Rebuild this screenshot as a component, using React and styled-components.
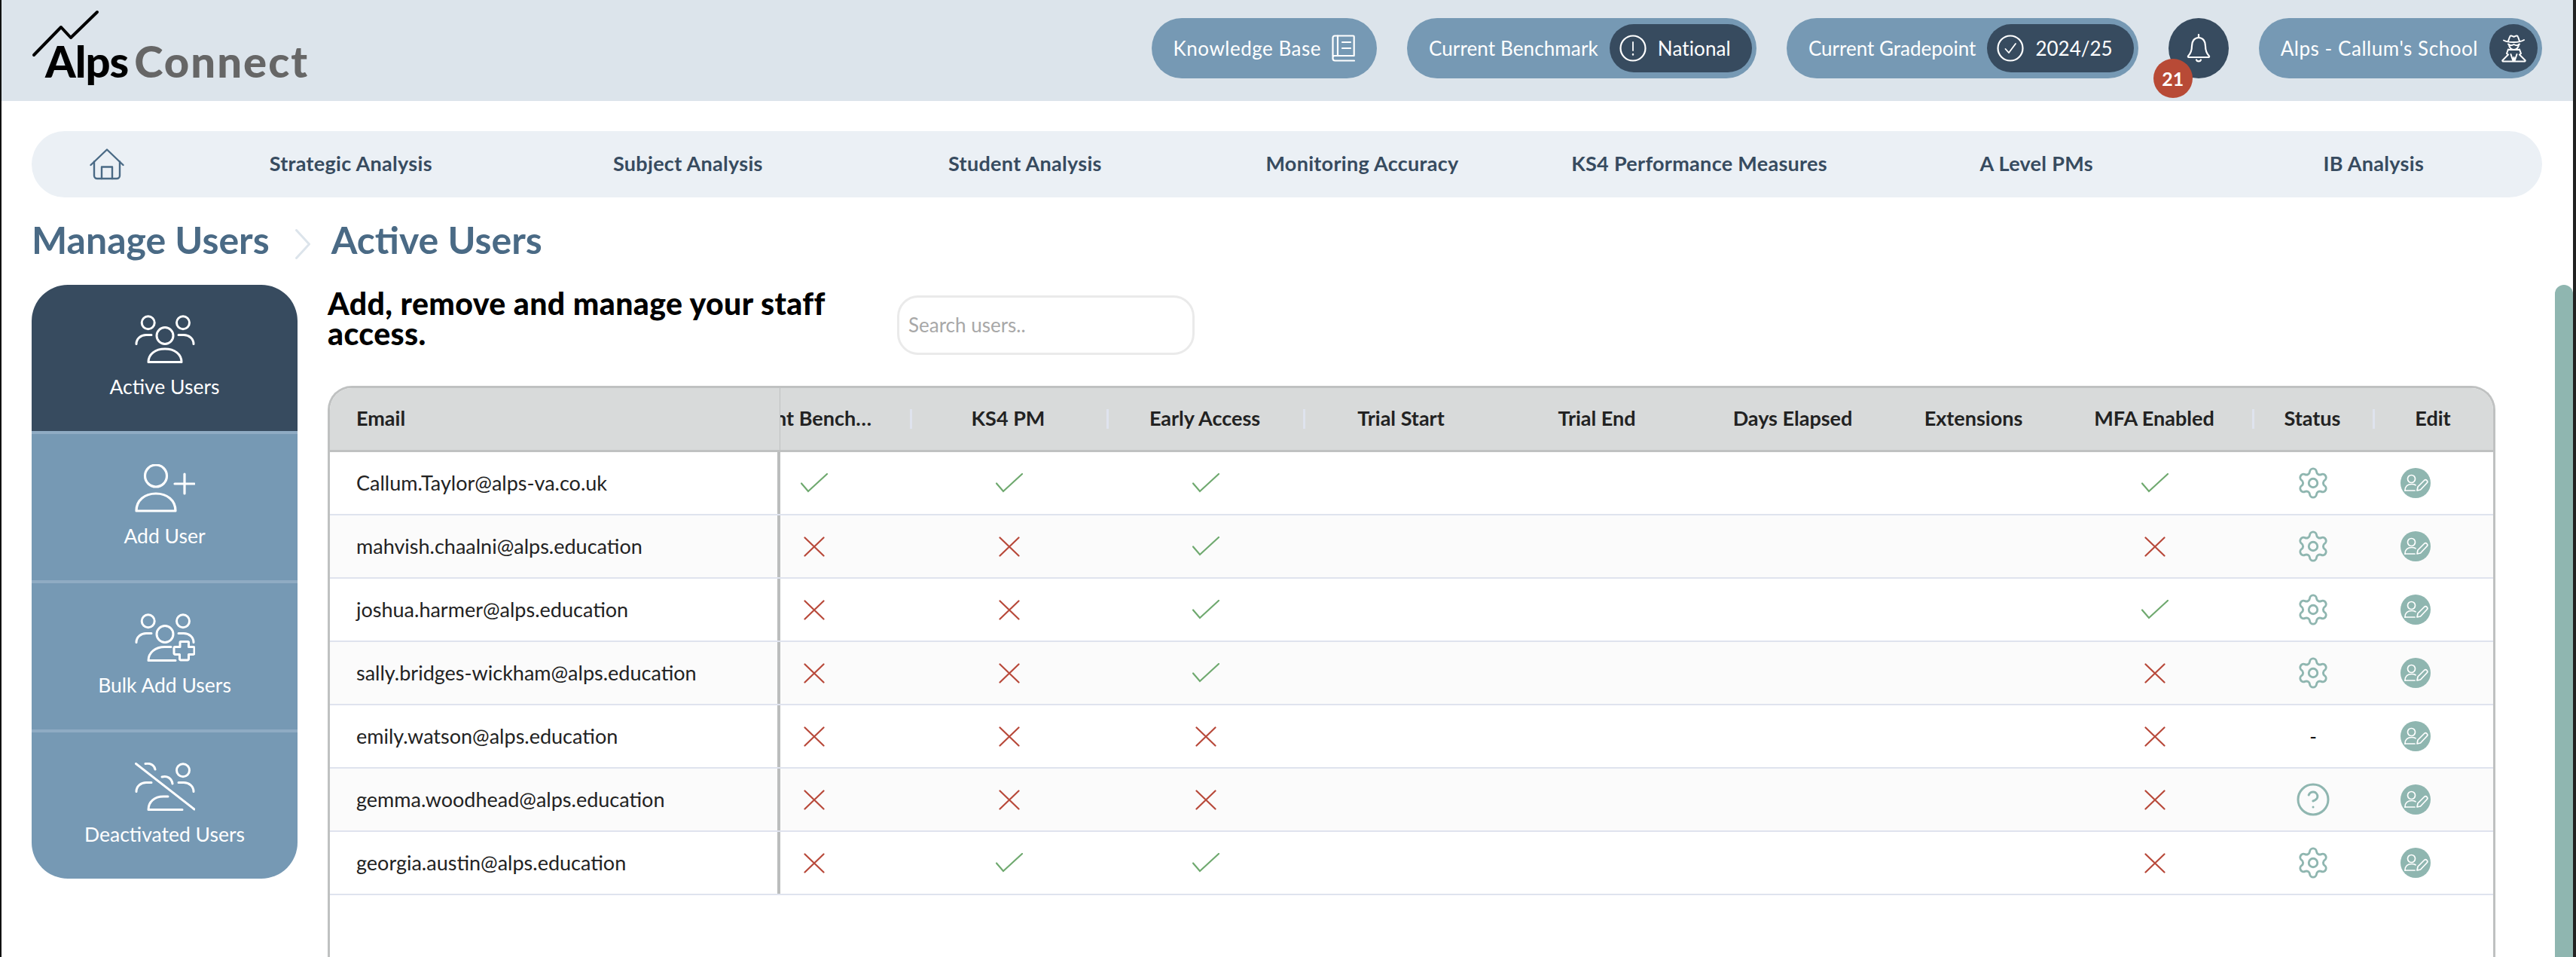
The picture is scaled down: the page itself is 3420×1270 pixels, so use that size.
import React from "react";
import styled, { createGlobalStyle } from "styled-components";
import { Settings, CircleHelp } from "lucide-react";

const FONT = `"Lato", "Noto Sans", sans-serif`;

const Global = createGlobalStyle`
  html, body { margin: 0; padding: 0; background: #fff; overflow: hidden; }
  * { box-sizing: border-box; }
  body { font-family: ${FONT}; }
`;

const Frame = styled.div`
  position: relative;
  width: 3420px;
  height: 1270px;
  overflow: hidden;
  background: #fff;
  border-left: 2px solid #111;
  border-right: 4px solid #222;
  font-size: 26px;
`;

const Header = styled.header`
  height: 134px;
  background: #dce4eb;
  display: flex;
  align-items: flex-start;
  justify-content: space-between;
  padding: 24px 41px 0 58px;
`;

const Logo = styled.div`
  position: relative;
  display: flex;
  align-items: baseline;
  gap: 8px;
  margin-top: 25px;
  font-family: "Lato", sans-serif;
  font-weight: 900;
  font-size: 58px;
  line-height: 64px;
`;
const LogoAlps = styled.span` color: #000; letter-spacing: -1px; `;
const LogoConnect = styled.span` color: #666; letter-spacing: 2px; `;
const LogoLine = styled.svg`
  position: absolute;
  left: -18px;
  top: -36px;
`;

const HeaderTools = styled.div`
  display: flex;
  align-items: center;
  gap: 40px;
`;

const Pill = styled.div`
  height: 80px;
  border-radius: 40px;
  background: #7699b4;
  color: #fff;
  display: flex;
  align-items: center;
  padding: ${(p) => p.$pad || "0 6px 0 29px"};
  gap: ${(p) => p.$gap || "15px"};
  font-size: 26px;
  letter-spacing: ${(p) => p.$track || "0"};
  white-space: nowrap;
`;

const PillValue = styled.div`
  height: 64px;
  border-radius: 32px;
  background: #374b5f;
  display: flex;
  align-items: center;
  justify-content: center;
  gap: 15px;
  min-width: ${(p) => p.$min || "64px"};
  padding: ${(p) => p.$pad || "0 28px 0 13px"};
`;

const BellButton = styled.div`
  position: relative;
  width: 80px;
  height: 80px;
  border-radius: 50%;
  background: #374b5f;
  display: flex;
  align-items: center;
  justify-content: center;
`;

const Badge = styled.span`
  position: absolute;
  left: -20px;
  top: 54px;
  width: 52px;
  height: 52px;
  border-radius: 50%;
  background: #b84a36;
  color: #fff;
  font-size: 25px;
  font-weight: 700;
  display: flex;
  align-items: center;
  justify-content: center;
`;

const Nav = styled.nav`
  height: 88px;
  margin: 40px 41px 0 40px;
  padding-bottom: 3px;
  border-radius: 44px;
  background: #ebf0f5;
  display: flex;
  align-items: center;
`;
const HomeLink = styled.div`
  width: 200px;
  display: flex;
  justify-content: center;
  margin-top: 3px;
`;
const NavLink = styled.div`
  flex: 1;
  text-align: center;
  color: #374b5f;
  font-weight: 700;
  font-size: 27px;
  letter-spacing: 0.3px;
  white-space: nowrap;
`;

const Crumbs = styled.div`
  height: 116px;
  margin-left: 40px;
  padding-bottom: 4px;
  display: flex;
  align-items: center;
  font-size: 50px;
  font-weight: 700;
  color: #4a6a85;
`;
const CrumbText = styled.span`
  white-space: nowrap;
`;
const CrumbChevron = styled.svg`
  margin: 12px 28px 0 34px;
`;

const Body = styled.div`
  display: flex;
  align-items: flex-start;
  gap: 40px;
  margin: 0 103px 0 40px;
`;

const Sidebar = styled.aside`
  width: 353px;
  flex: none;
  border-radius: 48px;
  overflow: hidden;
  display: flex;
  flex-direction: column;
`;
const SideItem = styled.div`
  height: ${(p) => (p.$last ? "194px" : "198px")};
  padding-top: 40px;
  background: ${(p) => (p.$active ? "#374b5f" : "#7699b4")};
  border-bottom: ${(p) => (p.$last ? "none" : "4px solid #8fabc3")};
  color: #fff;
  display: flex;
  flex-direction: column;
  align-items: center;
`;
const SideLabel = styled.span`
  margin-top: 13px;
  line-height: 36px;
  font-size: 26.500px;
  white-space: nowrap;
`;

const Main = styled.main`
  flex: 1;
  min-width: 0;
`;
const Intro = styled.div`
  display: flex;
  align-items: flex-start;
  height: 134px;
`;
const Heading = styled.h2`
  width: 756px;
  margin: 5px 0 0;
  padding-right: 70px;
  font-size: 41px;
  line-height: 40px;
  font-weight: 900;
  letter-spacing: 0.4px;
  color: #000;
`;
const SearchBox = styled.div`
  width: 395px;
  height: 79px;
  margin-top: 14px;
  border: 3px solid #eaeaea;
  border-radius: 28px;
  padding: 0 0 2px 12px;
  display: flex;
  align-items: center;
  color: #a8a8a8;
  font-size: 26px;
`;

const Table = styled.div`
  height: 770px;
  border: 3px solid #bfc1c1;
  border-bottom: none;
  border-radius: 32px 32px 0 0;
  overflow: hidden;
  color: #222;
  font-size: 27px;
`;

const Row = styled.div`
  display: flex;
  height: 84px;
  background: ${(p) => (p.$alt ? "#fbfbfb" : "#fff")};
  border-bottom: 2px solid #dfe3ee;
`;
const HeadRow = styled.div`
  display: flex;
  height: 85px;
  background: #d8dada;
  border-bottom: 3px solid #bfc1c1;
  font-weight: 700;
`;

const EmailCell = styled.div`
  width: 598px;
  flex: none;
  padding: 0 0 2px 35px;
  display: flex;
  align-items: center;
  border-right: 4px solid #bbbdbd;
  white-space: nowrap;
`;
const EmailHead = styled(EmailCell)`
  border-right: 1px solid #bfc1c1;
  padding-bottom: 3px;
`;

const Clip = styled.div`
  flex: 1;
  min-width: 0;
  overflow: hidden;
`;
const Track = styled.div`
  margin-left: -84px;
  width: 2358px;
  height: 100%;
  display: grid;
  grid-template-columns: 256px 261px 261px 260px 260px 260px 220px 260px 160px 160px;
`;
const Cell = styled.div`
  display: flex;
  align-items: center;
  justify-content: ${(p) => (p.$start ? "flex-start" : "center")};
  padding-left: ${(p) => (p.$start ? "37px" : "2px")};
  min-width: 0;
`;
const HeadCell = styled.div`
  position: relative;
  display: flex;
  align-items: center;
  justify-content: center;
  white-space: nowrap;
  overflow: hidden;
  padding: ${(p) => (p.$clip ? "0 37px 3px 10px" : "0 14px 3px")};
  &::before {
    content: "";
    display: ${(p) => (p.$sep ? "block" : "none")};
    position: absolute;
    left: 0;
    top: 28px;
    width: 3px;
    height: 26px;
    background: #dfe3ee;
  }
`;
const HeadLabel = styled.span`
  min-width: 0;
  overflow: hidden;
  text-overflow: ellipsis;
`;
const StatusDash = styled.span`
  color: #111;
  font-size: 26px;
`;
const EditBadge = styled.div`
  width: 40px;
  height: 40px;
  border-radius: 50%;
  background: #8fb6b0;
  display: flex;
`;
const StatusIcon = styled.div`
  display: flex;
  color: #8fb6b0;
`;

const ScrollThumb = styled.div`
  position: absolute;
  right: 0;
  top: 378px;
  bottom: 0;
  width: 24px;
  background: #8fb6b0;
  border-radius: 12px 12px 0 0;
`;

/* ---------- drawings ---------- */
const stroke = { fill: "none", stroke: "currentColor", strokeLinecap: "round", strokeLinejoin: "round" };

const Home = () => (
  <svg width="46" height="42" viewBox="0 0 46 42" {...stroke} strokeWidth="2.4" color="#4a6a85">
    <path d="M1.500 22 23 1.500 44.500 22" />
    <path d="M6 17.500V36a4 4 0 0 0 4 4h26a4 4 0 0 0 4-4V17.500" />
    <path d="M16 40V24.500h14V40" />
  </svg>
);
const Book = () => (
  <svg width="31" height="36" viewBox="0 0 31 36" {...stroke} strokeWidth="2.2" color="#fff">
    <path d="M1.500 29V4a2.500 2.500 0 0 1 2.500-2.500h24.500a1.200 1.200 0 0 1 1.200 1.200V28H4a2.500 2.500 0 0 0-2.500 2.500v1A3 3 0 0 0 4.500 34.500H30" />
    <path d="M8 1.500V28" />
    <path d="M14 10h11M14 18h11" />
  </svg>
);
const AlertCircle = () => (
  <svg width="36" height="36" viewBox="0 0 36 36" {...stroke} strokeWidth="2.2" color="#fff">
    <circle cx="18" cy="18" r="16.500" />
    <path d="M18 10v11" strokeWidth="1.8" />
    <path d="M18 26v.5" strokeWidth="2.4" />
  </svg>
);
const CheckCircle = () => (
  <svg width="36" height="36" viewBox="0 0 36 36" {...stroke} strokeWidth="2.2" color="#fff">
    <circle cx="18" cy="18" r="16.500" />
    <path d="m11.500 19 4.500 5 9-12" strokeWidth="1.8" />
  </svg>
);
const Bell = () => (
  <svg width="34" height="38" viewBox="0 0 34 38" {...stroke} strokeWidth="2.2" color="#fff">
    <path d="M17 1v4" />
    <path d="M17 5C11 5 8 10 8 16c0 7-1.500 10-5 13.500a1 1 0 0 0 .8 1.500h26.400a1 1 0 0 0 .8-1.500C27.500 26 26 23 26 16c0-6-3-11-9-11Z" />
    <path d="M14 34.500c1 2.500 5 2.500 6 0" />
  </svg>
);
const Secret = () => (
  <svg width="33" height="37" viewBox="0 0 33 37" {...stroke} strokeWidth="2" color="#fff">
    <path d="M3 7.500c6 3.500 21 3.500 27-.5" />
    <path d="M9 8.500 11 3c.5-1.500 2-2 3.500-1.200l2 1 2-1c1.500-.8 3-.3 3.500 1.200l2 5.500" />
    <path d="M9 12.500c2 2 5 2 7.500.5 2.500 1.500 5.500 1.500 7.500-.5" />
    <path d="M10 13c0 4 3 7 6.500 7S23 17 23 13" />
    <path d="M9 19.500 7 25l2 1.500-7.500 7.500c-.5.5 0 1.500.5 1.500h29c.5 0 1-1 .5-1.500L24 26.500l2-1.500-2-5.500" />
    <path d="M9 20h15" />
    <path d="m12.500 26 3 9 1-5 1 5 3-9" />
  </svg>
);

const Group = () => (
  <svg width="80" height="64" viewBox="0 0 80 64" {...stroke} strokeWidth="3" color="#fff">
    <circle cx="17.700" cy="10.300" r="8.500" />
    <circle cx="64" cy="10.300" r="8.500" />
    <circle cx="40" cy="27.500" r="11" />
    <path d="M2 38.500C2 31.500 8 26.500 15 26.500h7" />
    <path d="M78 38.500C78 31.500 72 26.500 65 26.500h-7" />
    <path d="M18 62.500C18 52 27 45 40 45s22 7 22 17.500Z" />
  </svg>
);
const AddPerson = () => (
  <svg width="80" height="64" viewBox="0 0 80 64" {...stroke} strokeWidth="3.200" color="#fff">
    <circle cx="28" cy="15.500" r="14.500" />
    <path d="M2 62C2 48 13 39 28 39s26 9 26 23Z" />
    <path d="M53 26h26M66 13v26" />
  </svg>
);
const BulkAdd = () => (
  <svg width="80" height="64" viewBox="0 0 80 64" {...stroke} strokeWidth="3" color="#fff">
    <circle cx="17.700" cy="10.300" r="8.500" />
    <circle cx="64" cy="10.300" r="8.500" />
    <circle cx="40" cy="27.500" r="11" />
    <path d="M2 38.500C2 31.500 8 26.500 15 26.500h7" />
    <path d="M78 38.500C78 31.500 72 26.500 65 26.500h-7" />
    <path d="M48 44.500h-8C27 44.500 18 52 18 62.500h36" />
    <path d="M60.500 37.500h10a1 1 0 0 1 1 1v6h6a1.500 1.500 0 0 1 1.500 1.500v7a1.500 1.500 0 0 1-1.500 1.500h-6v6a1.500 1.500 0 0 1-1.500 1.500h-9a1.500 1.500 0 0 1-1.500-1.500v-6h-6a1.500 1.500 0 0 1-1.500-1.500v-7a1.500 1.500 0 0 1 1.500-1.500h6.500v-6a1 1 0 0 1 1-1Z" />
  </svg>
);
const GroupOff = () => (
  <svg width="80" height="64" viewBox="0 0 80 64" {...stroke} strokeWidth="3" color="#fff">
    <path d="M1.500 1.500 79 62" />
    <path d="M14 1.500C20 .5 26 3 27 9" />
    <circle cx="64" cy="10.300" r="8.500" />
    <path d="M36 19c7-2 13 2 14 9" />
    <path d="M2 38.500C2 31.500 8 26.500 15 26.500h7" />
    <path d="M78 38.500C78 31.500 72 26.500 65 26.500h-7" />
    <path d="M63 62.500H18C18 52 26 45 38 45h6" />
  </svg>
);

const Tick = () => (
  <svg width="36" height="26" viewBox="0 0 36 26" fill="none" stroke="#6fa96f" strokeWidth="2.200" strokeLinecap="round">
    <path d="M1 13.500 10 24 35 1" />
  </svg>
);
const Cross = () => (
  <svg width="28" height="27" viewBox="0 0 28 27" fill="none" stroke="#b8493a" strokeWidth="2.200" strokeLinecap="round">
    <path d="M1.500 1.500 26.500 25.500M26.500 1.500 1.500 25.500" />
  </svg>
);
const EditUser = () => (
  <svg width="40" height="40" viewBox="0 0 40 40" {...stroke} strokeWidth="1.700" color="#fff">
    <circle cx="14.500" cy="14.500" r="5" />
    <path d="M6 30c0-5.500 3.500-8.500 9-8.500 2 0 3.500.4 5 1.300" />
    <path d="M6 30h13" />
    <path d="m22 30 1-5 8.500-8.500a2 2 0 0 1 3.500 3.500L26.500 29Z" />
  </svg>
);

/* ---------- data ---------- */
const T = true;
const F = false;
const users = [
  { email: "Callum.Taylor@alps-va.co.uk", bench: T, ks4: T, early: T, mfa: T, status: "gear" },
  { email: "mahvish.chaalni@alps.education", bench: F, ks4: F, early: T, mfa: F, status: "gear" },
  { email: "joshua.harmer@alps.education", bench: F, ks4: F, early: T, mfa: T, status: "gear" },
  { email: "sally.bridges-wickham@alps.education", bench: F, ks4: F, early: T, mfa: F, status: "gear" },
  { email: "emily.watson@alps.education", bench: F, ks4: F, early: F, mfa: F, status: "dash" },
  { email: "gemma.woodhead@alps.education", bench: F, ks4: F, early: F, mfa: F, status: "help" },
  { email: "georgia.austin@alps.education", bench: F, ks4: T, early: T, mfa: F, status: "gear" },
];
const columns = [
  { label: "Current Benchmark", clip: true },
  { label: "KS4 PM", sep: true },
  { label: "Early Access", sep: true },
  { label: "Trial Start", sep: true },
  { label: "Trial End" },
  { label: "Days Elapsed" },
  { label: "Extensions" },
  { label: "MFA Enabled" },
  { label: "Status", sep: true },
  { label: "Edit", sep: true },
];
const navItems = ["Strategic Analysis", "Subject Analysis", "Student Analysis", "Monitoring Accuracy", "KS4 Performance Measures", "A Level PMs", "IB Analysis"];
const sideItems = [
  { label: "Active Users", Icon: Group, active: true },
  { label: "Add User", Icon: AddPerson },
  { label: "Bulk Add Users", Icon: BulkAdd },
  { label: "Deactivated Users", Icon: GroupOff },
];

const Flag = ({ on }) => (on ? <Tick /> : <Cross />);
const StatusMark = ({ kind }) => {
  if (kind === "dash") return <StatusDash>-</StatusDash>;
  const Icon = kind === "help" ? CircleHelp : Settings;
  return (
    <StatusIcon>
      <Icon size={kind === "help" ? 48 : 46} strokeWidth={1.5} />
    </StatusIcon>
  );
};

export default function App() {
  return (
    <Frame>
      <Global />
      <Header>
        <Logo>
          <LogoLine width="92" height="64" viewBox="0 0 92 64" fill="none" stroke="#000" strokeWidth="4" strokeLinecap="round" strokeLinejoin="round">
            <path d="M3 60 39 23l13 14L87 3" />
          </LogoLine>
          <LogoAlps>Alps</LogoAlps>
          <LogoConnect>Connect</LogoConnect>
        </Logo>
        <HeaderTools>
          <Pill $pad="0 29px" $gap="14px" $track="0.5px">
            Knowledge Base
            <Book />
          </Pill>
          <Pill $track="0.12px">
            Current Benchmark
            <PillValue>
              <AlertCircle />
              National
            </PillValue>
          </Pill>
          <Pill>
            Current Gradepoint
            <PillValue>
              <CheckCircle />
              2024/25
            </PillValue>
          </Pill>
          <BellButton>
            <Bell />
            <Badge>21</Badge>
          </BellButton>
          <Pill $track="0.55px">
            Alps - Callum's School
            <PillValue $pad="0">
              <Secret />
            </PillValue>
          </Pill>
        </HeaderTools>
      </Header>

      <Nav>
        <HomeLink>
          <Home />
        </HomeLink>
        {navItems.map((item) => (
          <NavLink key={item}>{item}</NavLink>
        ))}
      </Nav>

      <Crumbs>
        <CrumbText>Manage Users</CrumbText>
        <CrumbChevron width="20" height="40" viewBox="0 0 20 40" fill="none" stroke="#dce4eb" strokeWidth="3" strokeLinecap="round" strokeLinejoin="round">
          <path d="M1.500 1.500 18.500 20 1.500 38.500" />
        </CrumbChevron>
        <CrumbText>Active Users</CrumbText>
      </Crumbs>

      <Body>
        <Sidebar>
          {sideItems.map(({ label, Icon, active }, i) => (
            <SideItem key={label} $active={active} $last={i === sideItems.length - 1}>
              <Icon />
              <SideLabel>{label}</SideLabel>
            </SideItem>
          ))}
        </Sidebar>
        <Main>
          <Intro>
            <Heading>Add, remove and manage your staff access.</Heading>
            <SearchBox>Search users..</SearchBox>
          </Intro>
          <Table>
            <HeadRow>
              <EmailHead>Email</EmailHead>
              <Clip>
                <Track>
                  {columns.map((c) => (
                    <HeadCell key={c.label} $sep={c.sep} $clip={c.clip}>
                      <HeadLabel>{c.label}</HeadLabel>
                    </HeadCell>
                  ))}
                </Track>
              </Clip>
            </HeadRow>
            {users.map((u, i) => (
              <Row key={u.email} $alt={i % 2 === 1}>
                <EmailCell>{u.email}</EmailCell>
                <Clip>
                  <Track>
                    <Cell><Flag on={u.bench} /></Cell>
                    <Cell><Flag on={u.ks4} /></Cell>
                    <Cell><Flag on={u.early} /></Cell>
                    <Cell />
                    <Cell />
                    <Cell />
                    <Cell />
                    <Cell><Flag on={u.mfa} /></Cell>
                    <Cell><StatusMark kind={u.status} /></Cell>
                    <Cell $start>
                      <EditBadge><EditUser /></EditBadge>
                    </Cell>
                  </Track>
                </Clip>
              </Row>
            ))}
          </Table>
        </Main>
      </Body>
      <ScrollThumb />
    </Frame>
  );
}
